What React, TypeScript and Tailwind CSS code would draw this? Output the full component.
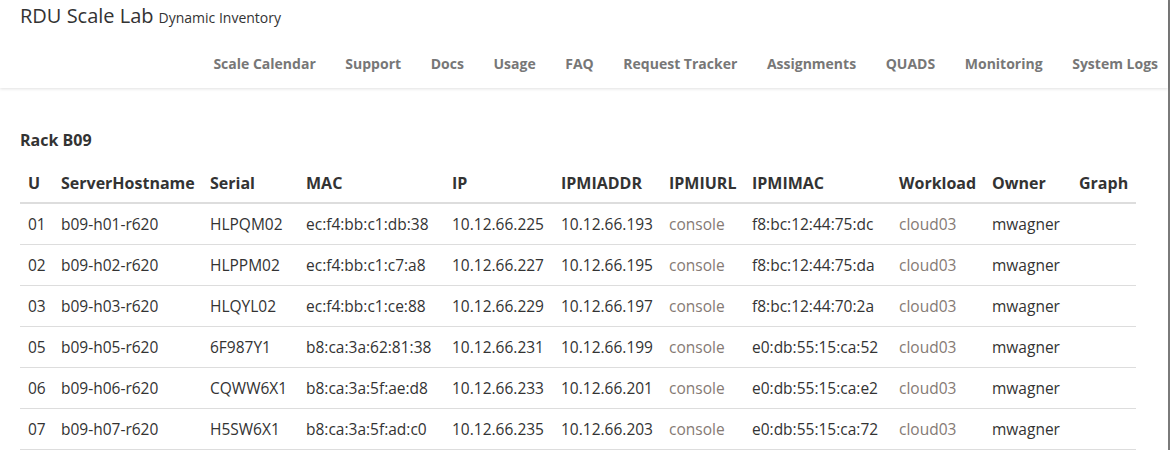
import React from 'react';

const navLinks = [
  'Scale Calendar',
  'Support',
  'Docs',
  'Usage',
  'FAQ',
  'Request Tracker',
  'Assignments',
  'QUADS',
  'Monitoring',
  'System Logs',
];

interface Host {
  u: string;
  host: string;
  serial: string;
  mac: string;
  ip: string;
  ipmiAddr: string;
  ipmiMac: string;
  workload: string;
  owner: string;
}

const hosts: Host[] = [
  { u: '01', host: 'b09-h01-r620', serial: 'HLPQM02', mac: 'ec:f4:bb:c1:db:38', ip: '10.12.66.225', ipmiAddr: '10.12.66.193', ipmiMac: 'f8:bc:12:44:75:dc', workload: 'cloud03', owner: 'mwagner' },
  { u: '02', host: 'b09-h02-r620', serial: 'HLPPM02', mac: 'ec:f4:bb:c1:c7:a8', ip: '10.12.66.227', ipmiAddr: '10.12.66.195', ipmiMac: 'f8:bc:12:44:75:da', workload: 'cloud03', owner: 'mwagner' },
  { u: '03', host: 'b09-h03-r620', serial: 'HLQYL02', mac: 'ec:f4:bb:c1:ce:88', ip: '10.12.66.229', ipmiAddr: '10.12.66.197', ipmiMac: 'f8:bc:12:44:70:2a', workload: 'cloud03', owner: 'mwagner' },
  { u: '05', host: 'b09-h05-r620', serial: '6F987Y1', mac: 'b8:ca:3a:62:81:38', ip: '10.12.66.231', ipmiAddr: '10.12.66.199', ipmiMac: 'e0:db:55:15:ca:52', workload: 'cloud03', owner: 'mwagner' },
  { u: '06', host: 'b09-h06-r620', serial: 'CQWW6X1', mac: 'b8:ca:3a:5f:ae:d8', ip: '10.12.66.233', ipmiAddr: '10.12.66.201', ipmiMac: 'e0:db:55:15:ca:e2', workload: 'cloud03', owner: 'mwagner' },
  { u: '07', host: 'b09-h07-r620', serial: 'H5SW6X1', mac: 'b8:ca:3a:5f:ad:c0', ip: '10.12.66.235', ipmiAddr: '10.12.66.203', ipmiMac: 'e0:db:55:15:ca:72', workload: 'cloud03', owner: 'mwagner' },
];

const columns = [
  { label: 'U', width: 'w-[33px]' },
  { label: 'ServerHostname', width: 'w-[149px]' },
  { label: 'Serial', width: 'w-[96px]' },
  { label: 'MAC', width: 'w-[146px]' },
  { label: 'IP', width: 'w-[109px]' },
  { label: 'IPMIADDR', width: 'w-[108px]' },
  { label: 'IPMIURL', width: 'w-[83px]' },
  { label: 'IPMIMAC', width: 'w-[147px]' },
  { label: 'Workload', width: 'w-[93px]' },
  { label: 'Owner', width: 'w-[87px]' },
  { label: 'Graph', width: 'w-[65px]' },
];

const cell = 'px-2 py-2 leading-[24px] whitespace-nowrap';

const App: React.FC = () => {
  return (
    <div className="w-[1170px] min-h-[450px] bg-white text-[#333] font-['Open_Sans',sans-serif] border-r-2 border-[#7a7a7a]">
      {/* Navbar */}
      <header className="h-[88px] bg-white shadow-[0_1px_3px_rgba(0,0,0,0.12)]">
        <div className="pl-5 pt-[3px] leading-[26px]">
          <span className="text-[20px]">RDU Scale Lab</span>
          <span className="text-[14px] ml-[5px]">Dynamic Inventory</span>
        </div>
        <nav className="flex justify-end gap-[29.6px] pr-[10px] mt-[23px]">
          {navLinks.map((l) => (
            <a key={l} className="text-[14px] font-bold text-[#777] leading-[20px]">
              {l}
            </a>
          ))}
        </nav>
      </header>

      {/* Rack */}
      <main className="pl-5 pr-[32px] pt-[40px]">
        <h3 className="text-[16px] font-bold leading-[24px]">Rack B09</h3>
        <table className="table-fixed border-collapse mt-[11px] w-[1116px] text-[15.5px]">
          <thead>
            <tr className="border-b-2 border-[#ddd]">
              {columns.map((c) => (
                <th key={c.label} className={`${c.width} text-left text-[16px] font-bold px-2 pt-2 pb-[7px] leading-[24px] whitespace-nowrap`}>
                  {c.label}
                </th>
              ))}
            </tr>
          </thead>
          <tbody>
            {hosts.map((h) => (
              <tr key={h.u} className="border-b border-[#ddd]">
                <td className={cell}>{h.u}</td>
                <td className={cell}>{h.host}</td>
                <td className={cell}>{h.serial}</td>
                <td className={cell}>{h.mac}</td>
                <td className={cell}>{h.ip}</td>
                <td className={cell}>{h.ipmiAddr}</td>
                <td className={cell}>
                  <a className="text-[#857a74]">console</a>
                </td>
                <td className={cell}>{h.ipmiMac}</td>
                <td className={cell}>
                  <a className="text-[#857a74]">{h.workload}</a>
                </td>
                <td className={cell}>{h.owner}</td>
                <td className={cell}></td>
              </tr>
            ))}
          </tbody>
        </table>
      </main>
    </div>
  );
};

export default App;
